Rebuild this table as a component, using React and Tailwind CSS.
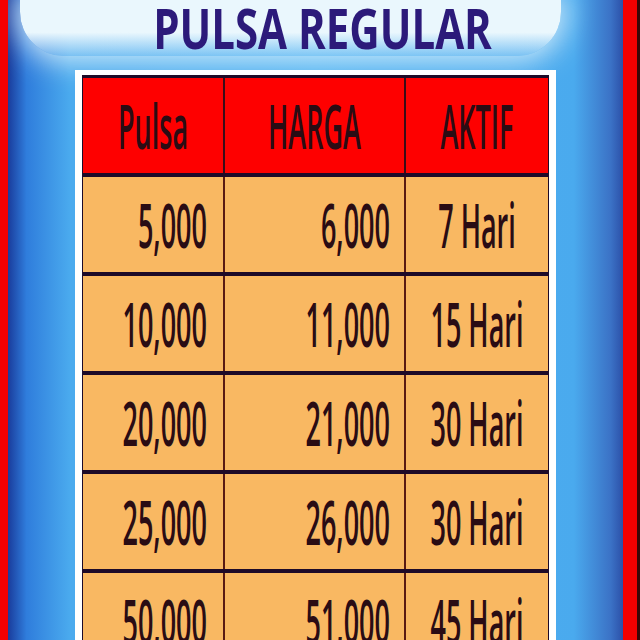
import React from "react";

const rows = [
  { pulsa: "5,000", harga: "6,000", aktif: "7 Hari" },
  { pulsa: "10,000", harga: "11,000", aktif: "15 Hari" },
  { pulsa: "20,000", harga: "21,000", aktif: "30 Hari" },
  { pulsa: "25,000", harga: "26,000", aktif: "30 Hari" },
  { pulsa: "50,000", harga: "51,000", aktif: "45 Hari" },
];

const font = { fontFamily: '"Open Sans", "Liberation Sans", sans-serif' };

const Cell = ({ children, className = "" }) => (
  <div className={`flex items-center ${className}`}>
    <span className="inline-block text-[27px] leading-none font-semibold text-[#2a0c14] scale-y-[2.25]">
      {children}
    </span>
  </div>
);

export default function App() {
  return (
    <div className="w-[640px] h-[640px] overflow-hidden flex" style={font}>
      <div className="w-[8px] shrink-0 bg-[#f40000]" />

      <div className="flex-1 flex flex-col overflow-hidden bg-[linear-gradient(to_right,#1a3c9c_0%,#2f7ddc_3%,#4aaaee_10%,#4fb2f2_50%,#4aaaee_92%,#3b72c6_98%,#2c50a8_100%)]">
        <div className="h-[56px] shrink-0 ml-[12px] mr-[62px] rounded-b-[44px] bg-[linear-gradient(to_bottom,#eaf7fd_0%,#eaf7fd_58%,rgba(234,247,253,0.3)_100%)] shadow-[0_0_28px_6px_rgba(234,247,253,0.8)] flex items-center justify-center pl-[64px]">
          <span className="inline-block text-[42px] leading-[0.9] font-bold text-[#2c1a7a] scale-y-[1.34]">
            PULSA REGULAR
          </span>
        </div>

        <div className="w-[481px] shrink-0 mx-auto mt-[14px] bg-white px-[7px] pt-[5px] pb-[40px]">
          <div className="flex flex-col gap-[4px] bg-[#1e0a28] pt-[3px] px-[1px]">
            <div className="grid grid-cols-[140px_179px_142px] gap-x-[2px] bg-[#3a0c18] h-[95px]">
              <Cell className="bg-[#fe0000] justify-center">Pulsa</Cell>
              <Cell className="bg-[#fe0000] justify-center">HARGA</Cell>
              <Cell className="bg-[#fe0000] justify-center">AKTIF</Cell>
            </div>

            {rows.map((r) => (
              <div
                key={r.pulsa}
                className="grid grid-cols-[140px_179px_142px] gap-x-[2px] bg-[#5a1a12] h-[95px]"
              >
                <Cell className="bg-[#f9b862] justify-end pr-[16px]">
                  {r.pulsa}
                </Cell>
                <Cell className="bg-[#f9b862] justify-end pr-[14px]">
                  {r.harga}
                </Cell>
                <Cell className="bg-[#f9b862] justify-center">{r.aktif}</Cell>
              </div>
            ))}
          </div>
        </div>
      </div>

      <div className="w-[14px] shrink-0 bg-[#f40000]" />
      <div className="w-[3px] shrink-0 bg-[#3a0808]" />
    </div>
  );
}
